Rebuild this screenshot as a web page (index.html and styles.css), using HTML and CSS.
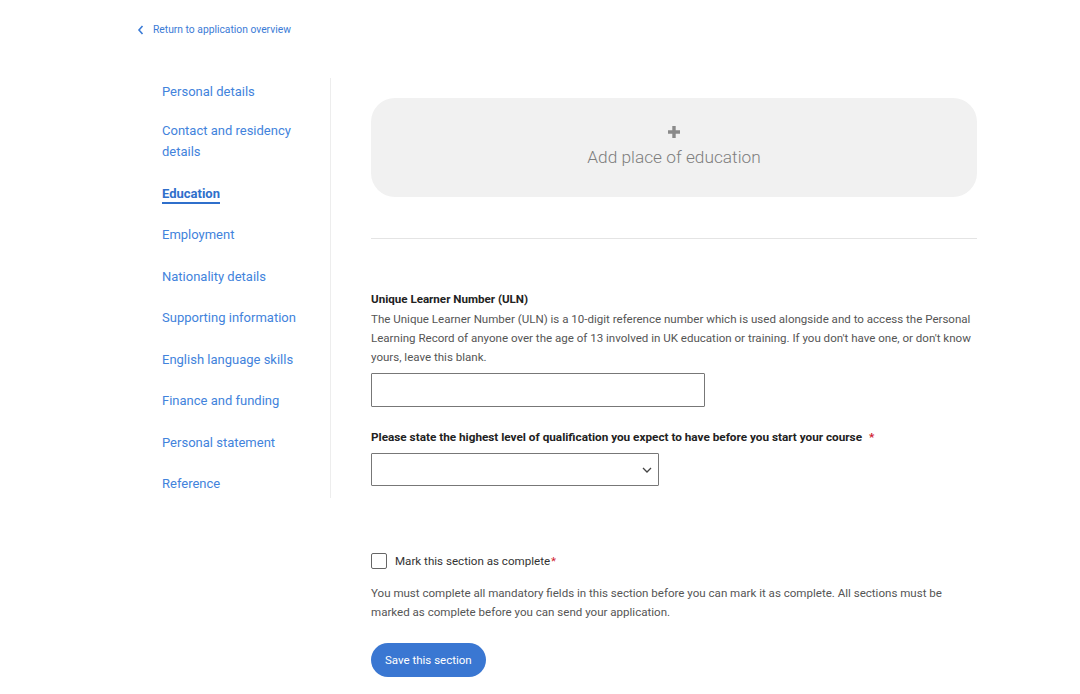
FILE: index.html
```html
<!DOCTYPE html>
<html>
<head>
<meta charset="utf-8">
<link rel="stylesheet" href="styles.css">
</head>
<body>
<div class="page">
  <a class="back" href="#">
    <svg class="back-icon" width="8" height="10" viewBox="0 0 8 10"><path d="M5.5 1 L2 5 L5.5 9" fill="none" stroke="#3b7bd6" stroke-width="1.6"/></svg>
    <span>Return to application overview</span>
  </a>
  <div class="layout">
    <nav class="sidenav">
      <a class="nav-item first" href="#">Personal details</a>
      <a class="nav-item" href="#">Contact and residency<br>details</a>
      <a class="nav-item active" href="#">Education</a>
      <a class="nav-item" href="#">Employment</a>
      <a class="nav-item" href="#">Nationality details</a>
      <a class="nav-item" href="#">Supporting information</a>
      <a class="nav-item" href="#">English language skills</a>
      <a class="nav-item" href="#">Finance and funding</a>
      <a class="nav-item" href="#">Personal statement</a>
      <a class="nav-item" href="#">Reference</a>
    </nav>
    <main class="main">
      <button class="add-box" type="button">
        <svg class="plus" width="14" height="14" viewBox="0 0 14 14"><path d="M7 1 V13 M1 7 H13" stroke="#8a8a8a" stroke-width="3.4"/></svg>
        <span class="add-text">Add place of education</span>
      </button>
      <hr class="divider">
      <div class="field">
        <label class="label">Unique Learner Number (ULN)</label>
        <p class="hint">The Unique Learner Number (ULN) is a 10-digit reference number which is used alongside and to access the Personal Learning Record of anyone over the age of 13 involved in UK education or training. If you don't have one, or don't know yours, leave this blank.</p>
        <input class="text-input" type="text">
      </div>
      <div class="field field-select">
        <label class="label label-wide">Please state the highest level of qualification you expect to have before you start your course <span class="req">*</span></label>
        <div class="select">
          <svg class="chev" width="10" height="6" viewBox="0 0 10 6"><path d="M1 1 L5 5 L9 1" fill="none" stroke="#444" stroke-width="1.3"/></svg>
        </div>
      </div>
      <div class="complete">
        <label class="check-row"><span class="checkbox"></span><span>Mark this section as complete</span><span class="req req-tight">*</span></label>
        <p class="note">You must complete all mandatory fields in this section before you can mark it as complete. All sections must be marked as complete before you can send your application.</p>
        <button class="save" type="button">Save this section</button>
      </div>
    </main>
  </div>
</div>
</body>
</html>
```

FILE: styles.css
```css
* { box-sizing: border-box; }
html, body { margin: 0; padding: 0; background: #fff; }
body {
  font-family: Roboto, "Liberation Sans", Arial, sans-serif;
  color: #333;
}
.page { width: 1080px; height: 694px; overflow: hidden; }
.back {
  display: flex;
  align-items: center;
  gap: 8px;
  padding: 23px 0 0 137px;
  height: 37px;
  font-size: 10.3px;
  line-height: 14px;
  color: #3b7bd6;
  text-decoration: none;
}
.back-icon { display: block; }
.layout {
  display: flex;
  margin-top: 41px;
  padding-left: 162px;
}
.sidenav {
  width: 169px;
  border-right: 1.5px solid #ededed;
  display: flex;
  flex-direction: column;
  align-items: flex-start;
  gap: 20.5px;
  padding: 3px 0 4px;
  height: 420px;
}
.nav-item {
  font-size: 13px;
  line-height: 21px;
  color: #4283dc;
  text-decoration: none;
}
.nav-item.first { margin-bottom: -2.5px; }
.nav-item.active {
  font-weight: 700;
  color: #2f6fcb;
  text-decoration: underline;
  text-decoration-thickness: 2px;
  text-underline-offset: 4px;
}
.main {
  margin-left: 40px;
  width: 606px;
  padding-top: 20px;
}
.add-box {
  width: 100%;
  height: 99px;
  border: 0;
  border-radius: 24px;
  background: #f1f1f1;
  display: flex;
  flex-direction: column;
  align-items: center;
  justify-content: flex-start;
  padding: 27px 0 0;
  font-family: inherit;
}
.plus { display: block; }
.add-text {
  margin-top: 8px;
  font-size: 17.3px;
  font-weight: 300;
  line-height: 20px;
  color: #7e7e7e;
}
.divider {
  margin: 41px 0 0;
  border: 0;
  border-top: 1.5px solid #e4e4e4;
}
.field { margin-top: 53px; }
.label {
  display: block;
  font-size: 11.6px;
  line-height: 14px;
  font-weight: 700;
  color: #222;
}
.label-wide { font-size: 11.75px; }
.req { color: #d0202e; font-weight: 700; margin-left: 4px; }
.req-tight { margin-left: 1px; font-weight: 400; }
.hint {
  margin: 3.5px 0 0;
  font-size: 11.55px;
  line-height: 19px;
  color: #555;
}
.text-input {
  display: block;
  margin-top: 6.5px;
  width: 334px;
  height: 34px;
  border: 1px solid #777;
  border-radius: 1px;
  background: #fff;
}
.field-select { margin-top: 23px; }
.select {
  margin-top: 9px;
  width: 288px;
  height: 33px;
  border: 1px solid #777;
  border-radius: 1px;
  display: flex;
  align-items: center;
  justify-content: flex-end;
  padding-right: 6px;
}
.chev { display: block; }
.complete { margin-top: 66px; }
.check-row {
  display: flex;
  align-items: center;
  font-size: 11.6px;
  line-height: 18px;
  color: #333;
}
.checkbox {
  width: 16px;
  height: 16px;
  border: 1.5px solid #666;
  border-radius: 2px;
  margin-right: 8px;
  background: #fff;
}
.note {
  margin: 13.5px 0 0;
  font-size: 11.55px;
  line-height: 19px;
  color: #555;
  width: 590px;
}
.save {
  margin-top: 21.5px;
  height: 34px;
  padding: 0 14px;
  border: 0;
  border-radius: 17px;
  background: #3a77d2;
  color: #fff;
  font-family: inherit;
  font-size: 11.5px;
}
```
